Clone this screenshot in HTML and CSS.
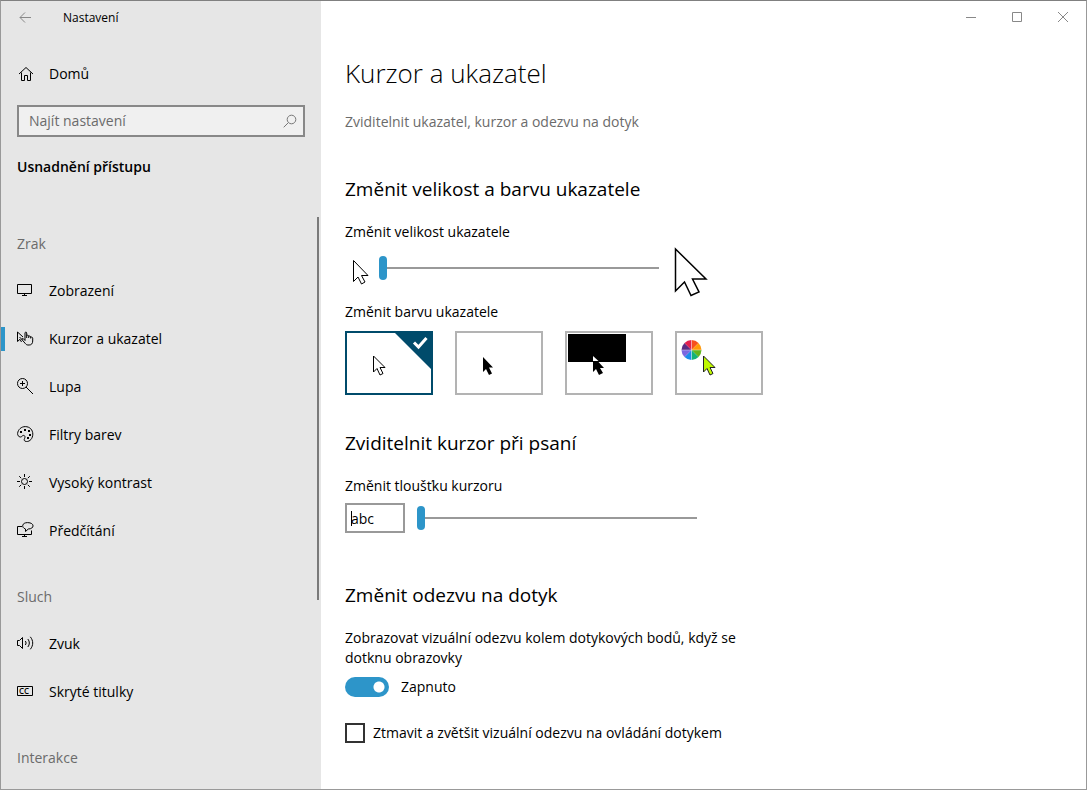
FILE: index.html
```
<!DOCTYPE html>
<html lang="cs">
<head>
<meta charset="utf-8">
<title>Nastavení</title>
<link rel="stylesheet" href="styles.css">
</head>

<body>
  <div class="window">
    <aside class="sidebar">
      <header class="app-bar">
        <button type="button" class="back" aria-label="Zpět">
          <svg width="12" height="12" viewBox="0 0 12 12"><path d="M12 5.5H1M6 .5l-5 5 5 5"/></svg>
        </button>
        <span>Nastavení</span>
      </header>

      <a href="#" class="nav-link home">
        <svg width="17" height="16" viewBox="0 0 17 16"><path d="M2 8l7-6.500L16 8M4.500 6.500v8h3v-5h3v5h3v-8"/></svg>
        Domů
      </a>

      <div class="search">
        <input type="search" placeholder="Najít nastavení" aria-label="Najít nastavení">
        <svg width="14" height="14" viewBox="0 0 14 14"><circle cx="8.5" cy="5.5" r="4.3"/><path d="M5.300 8.700L.7 13.300"/></svg>
      </div>

      <h2 class="category">Usnadnění přístupu</h2>

      <div class="nav-area">
        <nav>
          <h3>Zrak</h3>
          <a href="#" class="nav-link">
            <svg width="17" height="16" viewBox="0 0 17 16"><path d="M.5 1.500h14v9H.5zM7.500 10.500v2M5 12.500h5"/></svg>
            Zobrazení
          </a>
          <a href="#" class="nav-link active">
            <svg width="17" height="16" viewBox="0 0 17 16"><path d="M6 6L.5 1v9.500L3 8.300 4.500 11M2.500 6l3 3M8 9.500V2c0-1.200 1.700-1.200 1.700 0v5M9.700 4.500c.8-.6 2-.2 2 .7V7M11.700 5.200c.8-.5 2 0 2 .8V7.500M13.700 6.200c1-.4 2 .1 2 1V10c0 2.500-1.300 4-3.500 4H11c-1.200 0-2-.6-2.700-1.500L5 8.700c-.5-1 .7-1.700 1.400-1L8 9.500"/></svg>
            Kurzor a ukazatel
          </a>
          <a href="#" class="nav-link">
            <svg width="17" height="18" viewBox="0 0 17 18"><circle cx="5.5" cy="5.5" r="5"/><path d="M9 9l7 7M3 5.500h5M5.500 3v5"/></svg>
            Lupa
          </a>
          <a href="#" class="nav-link">
            <svg width="17" height="18" viewBox="0 0 17 18"><path d="M.6 7.500C1 3.500 4.300.6 8.300.6c4.500 0 7.500 3.300 7.500 7.500 0 4.500-3 7.600-6.300 7.400C7 15.300 6.800 14 7.600 12.400c.8-1.500.3-3-1-3-1.500 0-1.800 1.800-3.300 1.600C1.500 10.700.5 9.300.6 7.500z"/><path class="dots" d="M3 5h2v2H3zM7 3h2v2H7zM11 4h2v2h-2zM12 8h2v2h-2zM10 11h2v2h-2z"/></svg>
            Filtry barev
          </a>
          <a href="#" class="nav-link">
            <svg width="17" height="18" viewBox="0 0 17 18"><circle cx="7.5" cy="7.5" r="3"/><path d="M7.500 0v3M7.500 12v3M0 7.500h3M12 7.500h3M2.200 2.200l2 2M10.800 10.800l2 2M12.800 2.200l-2 2M4.200 10.800l-2 2"/></svg>
            Vysoký kontrast
          </a>
          <a href="#" class="nav-link">
            <svg width="17" height="18" viewBox="0 0 17 18"><path d="M5 4.500H.5v8h14v-4M7.500 12.500v2M5 14.500h5M8.500 7C4 5.500 5 .6 10.500.6c7.500 0 7 6.400.8 6.400L8.500 9.500z"/></svg>
            Předčítání
          </a>

          <h3>Sluch</h3>
          <a href="#" class="nav-link">
            <svg width="17" height="16" viewBox="0 0 17 16"><path d="M.5 4.500h2l3-3v11l-3-3h-2zM8.300 5c1 1.300 1 2.700 0 4M10.800 3c2 2.500 2 5.500 0 8M13.300.8c3.200 3.900 3.200 8.600 0 12.500"/></svg>
            Zvuk
          </a>
          <a href="#" class="nav-link">
            <svg width="17" height="16" viewBox="0 0 17 16"><path d="M.5 2.500h15v9H.5z"/><text x="2" y="10">CC</text></svg>
            Skryté titulky
          </a>

          <h3>Interakce</h3>
        </nav>
        <div class="scroll-thumb"></div>
      </div>
    </aside>

    <main>
      <div class="caption">
        <button type="button" aria-label="Minimalizovat"><svg width="10" height="10" viewBox="0 0 10 10"><path d="M0 5.500h10"/></svg></button>
        <button type="button" aria-label="Maximalizovat"><svg width="10" height="10" viewBox="0 0 10 10"><path d="M.5.5h9v9h-9z"/></svg></button>
        <button type="button" aria-label="Zavřít"><svg width="10" height="10" viewBox="0 0 10 10"><path d="M0 0l10 10M10 0L0 10"/></svg></button>
      </div>

      <div class="content">
        <h1>Kurzor a ukazatel</h1>
        <p class="intro">Zviditelnit ukazatel, kurzor a odezvu na dotyk</p>

        <section>
          <h2>Změnit velikost a barvu ukazatele</h2>
          <label for="size">Změnit velikost ukazatele</label>
          <div class="size-row">
            <svg class="pointer" width="18" height="26" viewBox="0 0 18 26"><path d="M1.500 1.500v21l4.500-4.500 3.500 7 3.500-2-3.500-6.500h6.500z"/></svg>
            <input type="range" id="size" min="1" max="15" value="1">
            <svg class="pointer big" width="34" height="50" viewBox="0 0 34 50"><path d="M1.500 2v42l9-9 6.500 13.500 8-3.500L18.500 32H32z"/></svg>
          </div>

          <fieldset>
            <legend>Změnit barvu ukazatele</legend>
            <div class="tiles">
              <label class="tile">
                <input type="radio" name="color" aria-label="Bílá" checked>
                <svg width="84" height="60" viewBox="0 0 84 60">
                  <path d="M48 0h36v36z" fill="#004b6b"/>
                  <path d="M67 9.500l4.500 4.500 8-9" fill="none" stroke="#fff" stroke-width="3"/>
                  <path d="M26.500 23v16l3.500-3.500 3 6.500 3-1.500-3-6h5z" fill="#fff" stroke="#000"/>
                </svg>
              </label>
              <label class="tile">
                <input type="radio" name="color" aria-label="Černá">
                <svg width="84" height="60" viewBox="0 0 84 60"><path d="M26 24v15l3-3 3 6 3-1.500-3-6h4z"/></svg>
              </label>
              <label class="tile">
                <input type="radio" name="color" aria-label="Invertovaná">
                <svg width="84" height="60" viewBox="0 0 84 60">
                  <path d="M1 1h58v28H1z"/>
                  <path d="M26 23v16l3-3 3 6 4-2-3-5h4z"/>
                  <path d="M26 23v5h5.500z" fill="#fff"/>
                </svg>
              </label>
              <label class="tile">
                <input type="radio" name="color" aria-label="Vlastní">
                <svg width="84" height="60" viewBox="0 0 84 60">
                  <g transform="translate(14.500 17)">
                    <path d="M0 0V-10A10 10 0 0 1 7-7z" fill="#f7501e"/>
                    <path d="M0 0L7-7A10 10 0 0 1 10 0z" fill="#ff9a0a"/>
                    <path d="M0 0H10A10 10 0 0 1 7 7z" fill="#62b51c"/>
                    <path d="M0 0L7 7A10 10 0 0 1 0 10z" fill="#14b377"/>
                    <path d="M0 0V10A10 10 0 0 1-7 7z" fill="#1b8eea"/>
                    <path d="M0 0L-7 7A10 10 0 0 1-10 0z" fill="#7b68e0"/>
                    <path d="M0 0H-10A10 10 0 0 1-7-7z" fill="#5b2d83"/>
                    <path d="M0 0L-7-7A10 10 0 0 1 0-10z" fill="#e3204f"/>
                    <path d="M-10 0H10M0-10V10" stroke="#fff" stroke-opacity=".4"/>
                  </g>
                  <path d="M26.500 23v16l3.500-3.500 3 6.500 3-1.500-3-6h5z" fill="#bff800" stroke="#222"/>
                </svg>
              </label>
            </div>
          </fieldset>
        </section>

        <section>
          <h2>Zviditelnit kurzor při psaní</h2>
          <label for="thickness">Změnit tloušťku kurzoru</label>
          <div class="caret-row">
            <div class="sample"><input type="text" value="abc" aria-label="Ukázka kurzoru" readonly></div>
            <input type="range" id="thickness" min="1" max="20" value="1">
          </div>
        </section>

        <section>
          <h2>Změnit odezvu na dotyk</h2>
          <label for="touch" class="touch-label">Zobrazovat vizuální odezvu kolem dotykových bodů, když se dotknu obrazovky</label>
          <div class="toggle-row">
            <input type="checkbox" role="switch" id="touch" class="toggle" checked>
            <span>Zapnuto</span>
          </div>
          <label class="check">
            <input type="checkbox">
            Ztmavit a zvětšit vizuální odezvu na ovládání dotykem
          </label>
        </section>
      </div>
    </main>
  </div>
</body>
</html>
```
FILE: styles.css
```
* {
  box-sizing: border-box;
}

body {
  margin: 0;
  font-family: "Open Sans", "Noto Sans", sans-serif;
  font-size: 14px;
  line-height: 20px;
  color: #000;
}

h1, h2, h3, p {
  margin: 0;
  font-weight: 400;
}

button {
  padding: 0;
  border: none;
  background: none;
}

svg {
  display: block;
  flex: none;
}

.window {
  display: flex;
  height: 100vh;
  border: 1px solid #999;
  border-top-color: #808080;
  background: #fff;
  overflow: hidden;
}

/* left panel */
.sidebar {
  display: flex;
  flex-direction: column;
  flex: none;
  width: 320px;
  background: #e6e6e6;
}

.sidebar svg,
.caption svg {
  fill: none;
  stroke: #000;
}

.app-bar {
  display: flex;
  align-items: center;
  height: 34px;
  font-size: 12px;
}

.back {
  width: 48px;
  margin-right: 14px;
  padding-left: 18px;
}

.sidebar .back svg {
  stroke: #888;
}

.nav-link {
  display: flex;
  align-items: center;
  gap: 15px;
  height: 48px;
  padding-left: 16px;
  color: #000;
  text-decoration: none;
}

.nav-link .dots {
  fill: #000;
  stroke: none;
}

.nav-link text {
  fill: #000;
  stroke: none;
  font-size: 8px;
  font-weight: 600;
}

.nav-link.active {
  padding-left: 12px;
}

.nav-link.active::before {
  content: "";
  width: 4px;
  height: 24px;
  margin: 0 -3px 0 -12px;
  background: #2d95c9;
}

.home {
  margin-top: 15px;
}

.search {
  display: flex;
  align-items: center;
  height: 32px;
  margin: 7px 16px 0;
  padding-right: 6px;
  border: 2px solid #888;
  background: #f0f0f0;
}

.search input {
  flex: 1;
  min-width: 0;
  padding: 0 10px;
  border: none;
  outline: none;
  background: none;
  font: inherit;
}

.search input::placeholder {
  color: #6b6b6b;
}

.sidebar .search svg {
  stroke: #777;
}

.category {
  margin: 20px 16px 0;
  font-size: 14px;
  font-weight: 600;
}

.nav-area {
  display: flex;
  flex: 1;
  min-height: 0;
  margin-top: 40px;
}

nav {
  flex: 1;
  padding-top: 17px;
  overflow: hidden;
}

nav h3 {
  padding: 0 16px 13px;
  font-size: 14px;
  color: #6b6b6b;
}

nav .nav-link + h3 {
  padding-top: 32px;
}

.scroll-thumb {
  width: 2px;
  height: 67%;
  margin-right: 2px;
  background: #7a7a7a;
}

/* right panel */
main {
  flex: 1;
  min-width: 0;
}

.caption {
  display: flex;
  justify-content: flex-end;
}

.caption button {
  display: flex;
  align-items: center;
  justify-content: center;
  width: 46px;
  height: 32px;
}

.caption svg {
  stroke: #888;
}

.content {
  padding: 22px 24px;
}

h1 {
  font-size: 26px;
  font-weight: 350;
  line-height: 36px;
}

.intro {
  margin-top: 21px;
  color: #6b6b6b;
}

section {
  margin-top: 34px;
}

section:first-of-type {
  margin-top: 43px;
}

section h2 {
  margin-bottom: 19px;
  font-size: 19px;
  line-height: 28px;
}

.size-row {
  display: flex;
  align-items: center;
  margin: 5px 0;
  padding-left: 7px;
}

.size-row input {
  margin: 0 15px 8px 9px;
}

.pointer {
  fill: #fff;
  stroke: #000;
}

.big {
  stroke-width: 1.5px;
}

input[type="range"] {
  appearance: none;
  width: 280px;
  height: 24px;
  background: linear-gradient(#999, #999) center / 100% 2px no-repeat;
}

input[type="range"]::-webkit-slider-thumb {
  appearance: none;
  width: 8px;
  height: 24px;
  border-radius: 4px;
  background: #2d95c9;
}

fieldset {
  margin: 0;
  padding: 0;
  border: none;
}

legend {
  padding: 0;
}

.tiles {
  display: flex;
  flex-wrap: wrap;
  gap: 22px;
  margin-top: 9px;
}

.tile {
  position: relative;
  border: 2px solid #b3b3b3;
}

.tile:has(:checked) {
  border-color: #004b6b;
}

.tile input {
  position: absolute;
  inset: 0;
  margin: 0;
  opacity: 0;
}

.caret-row {
  display: flex;
  align-items: center;
  gap: 12px;
  margin: 7px 0 48px;
}

.caret-row input {
  margin: 0;
}

.sample {
  position: relative;
  width: 60px;
  height: 30px;
  border: 2px solid #999;
}

.sample input {
  width: 100%;
  height: 100%;
  padding: 0 4px;
  border: none;
  outline: none;
  font: inherit;
}

/* text caret in front of the sample */
.sample::after {
  content: "";
  position: absolute;
  top: 6px;
  left: 4px;
  width: 1px;
  height: 15px;
  background: #000;
}

.touch-label {
  display: block;
  max-width: 410px;
}

.toggle-row {
  display: flex;
  align-items: center;
  gap: 12px;
  margin: 9px 0 26px;
}

.toggle {
  appearance: none;
  width: 44px;
  height: 20px;
  margin: 0;
  border-radius: 10px;
  background: radial-gradient(circle at 34px 10px, #fff 5px, #2d95c9 6px);
}

.check {
  display: flex;
  align-items: center;
  gap: 8px;
}

.check input {
  appearance: none;
  width: 20px;
  height: 20px;
  margin: 0;
  border: 2px solid #333;
}
```
